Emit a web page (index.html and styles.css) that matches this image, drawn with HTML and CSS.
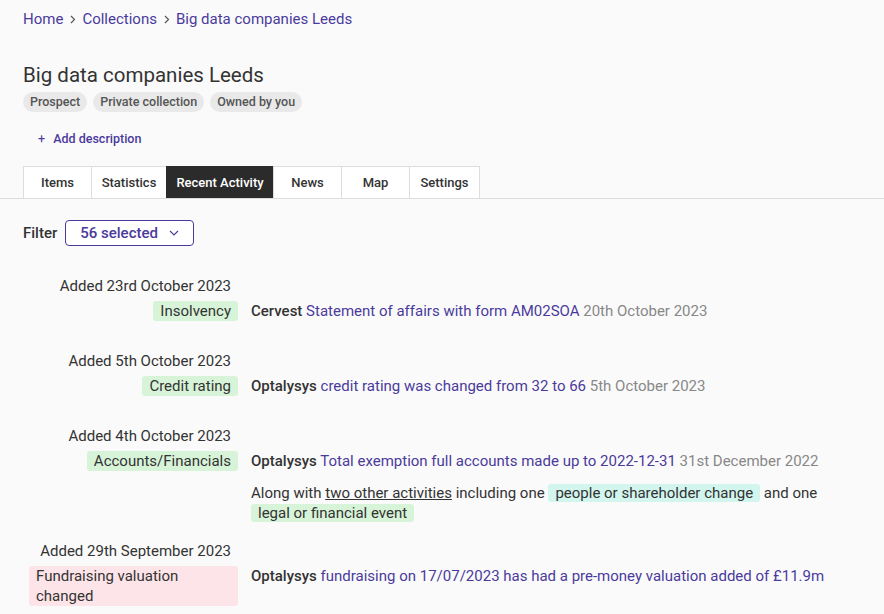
FILE: index.html
```html
<!DOCTYPE html>
<html lang="en">
<head>
    <meta charset="UTF-8">
    <meta name="viewport" content="width=device-width, initial-scale=1.0">
    <title>Big data companies Leeds</title>
    <link rel="stylesheet" href="styles.css">
</head>
<body>
    <div class="header">
        <nav class="breadcrumb">
            <a href="#">Home</a>
            <svg class="sep" width="6" height="9" viewBox="0 0 6 9"><path d="M1 1l3.5 3.5L1 8" fill="none" stroke="currentColor" stroke-width="1.2"/></svg>
            <a href="#">Collections</a>
            <svg class="sep" width="6" height="9" viewBox="0 0 6 9"><path d="M1 1l3.5 3.5L1 8" fill="none" stroke="currentColor" stroke-width="1.2"/></svg>
            <a href="#">Big data companies Leeds</a>
        </nav>

        <h1>Big data companies Leeds</h1>
        <div class="tags">
            <span class="tag">Prospect</span>
            <span class="tag">Private collection</span>
            <span class="tag">Owned by you</span>
        </div>

        <a href="#" class="add-desc"><span class="plus">+</span> Add description</a>
    </div>

    <div class="tabs-bar">
        <div class="tabs">
            <a href="#" class="tab">Items</a>
            <a href="#" class="tab">Statistics</a>
            <a href="#" class="tab active">Recent Activity</a>
            <a href="#" class="tab">News</a>
            <a href="#" class="tab">Map</a>
            <a href="#" class="tab">Settings</a>
        </div>
    </div>

    <div class="content">
        <div class="filter">
            <span class="filter-label">Filter</span>
            <button class="filter-btn">
                56 selected
                <svg width="10" height="6" viewBox="0 0 10 6"><path d="M1 1l4 4 4-4" fill="none" stroke="currentColor" stroke-width="1.1"/></svg>
            </button>
        </div>

        <div class="activity">
            <div class="when">
                <div class="added">Added 23rd October 2023</div>
                <span class="label green">Insolvency</span>
            </div>
            <div class="what">
                <p><b>Cervest</b> <a href="#">Statement of affairs with form AM02SOA</a> <span class="date">20th October 2023</span></p>
            </div>
        </div>

        <div class="activity">
            <div class="when">
                <div class="added">Added 5th October 2023</div>
                <span class="label green">Credit rating</span>
            </div>
            <div class="what">
                <p><b>Optalysys</b> <a href="#">credit rating was changed from 32 to 66</a> <span class="date">5th October 2023</span></p>
            </div>
        </div>

        <div class="activity">
            <div class="when">
                <div class="added">Added 4th October 2023</div>
                <span class="label green">Accounts/Financials</span>
            </div>
            <div class="what">
                <p><b>Optalysys</b> <a href="#">Total exemption full accounts made up to 2022-12-31</a> <span class="date">31st December 2022</span></p>
                <p class="more">Along with <a href="#" class="under">two other activities</a> including one <span class="label teal">people or shareholder change</span> and one <span class="label green">legal or financial event</span></p>
            </div>
        </div>

        <div class="activity">
            <div class="when">
                <div class="added">Added 29th September 2023</div>
                <span class="label pink wide">Fundraising valuation changed</span>
            </div>
            <div class="what">
                <p><b>Optalysys</b> <a href="#">fundraising on 17/07/2023 has had a pre-money valuation added of £11.9m</a></p>
            </div>
        </div>
    </div>
</body>
</html>
```

FILE: styles.css
```css
body {
    margin: 0;
    background: #fafafa;
    color: #333;
    font-family: Roboto, 'Liberation Sans', sans-serif;
    font-size: 15px;
}
a {
    color: #4a3a9c;
    text-decoration: none;
}
.header {
    padding: 9px 23px 0;
}
.breadcrumb {
    display: flex;
    align-items: center;
    line-height: 20px;
}
.breadcrumb .sep {
    color: #555;
    margin: 0 6px 0 7px;
}
h1 {
    margin: 33px 0 4px;
    font-size: 20.5px;
    font-weight: 400;
    line-height: 26px;
    color: #333;
}
.tags {
    display: flex;
    gap: 6px;
}
.tag {
    background: #e9e9e9;
    color: #555;
    font-size: 12.5px;
    font-weight: 500;
    border-radius: 10px;
    padding: 0 7px;
    line-height: 20px;
}
.add-desc {
    display: inline-block;
    margin: 17px 0 0 15px;
    font-size: 12.5px;
    font-weight: 500;
    line-height: 20px;
}
.add-desc .plus {
    font-weight: 400;
    margin-right: 5px;
}
.tabs-bar {
    margin-top: 17px;
    padding: 0 23px;
    border-bottom: 1px solid #ddd;
}
.tabs {
    display: flex;
}
.tab {
    box-sizing: border-box;
    width: 69px;
    height: 32px;
    display: flex;
    align-items: center;
    justify-content: center;
    background: #fff;
    border: 1px solid #ddd;
    border-bottom: none;
    margin-left: -1px;
    color: #333;
    font-size: 13px;
    font-weight: 500;
}
.tab:first-child {
    margin-left: 0;
}
.tab:nth-child(2) {
    width: 76px;
}
.tab.active {
    width: 108px;
    background: #2b2b2b;
    border-color: #2b2b2b;
    color: #fff;
}
.tab:last-child {
    width: 71px;
}
.content {
    padding: 21px 23px;
}
.filter {
    display: flex;
    align-items: center;
    gap: 8px;
}
.filter-label {
    font-weight: 500;
}
.filter-btn {
    display: flex;
    align-items: center;
    gap: 11px;
    height: 26px;
    padding: 0 14px;
    background: #fff;
    border: 1px solid #4a3a9c;
    border-radius: 4px;
    color: #4a3a9c;
    font-family: inherit;
    font-size: 15px;
    font-weight: 500;
}
.activity {
    display: grid;
    grid-template-columns: 215px 1fr;
    column-gap: 13px;
    margin-top: 30px;
}
.activity + .activity {
    margin-top: 18px;
}
.activity:last-child {
    margin-top: 20px;
}
.when {
    display: flex;
    flex-direction: column;
    align-items: flex-end;
}
.added {
    line-height: 20px;
    padding-right: 7px;
    margin-bottom: 5px;
}
.what {
    padding-top: 25px;
}
.what p {
    margin: 0 0 12px;
    line-height: 20px;
}
.what b {
    font-weight: 500;
}
.what .more {
    margin: 2px 0 -2px;
}
.date {
    color: #888;
}
.under {
    color: #333;
    text-decoration: underline;
}
.label {
    padding: 0 7px;
    border-radius: 3px;
    line-height: 20px;
    white-space: nowrap;
}
.green {
    background: #d8f4d8;
}
.teal {
    background: #d2f5ee;
}
.pink {
    background: #fde4e8;
}
.label.wide {
    box-sizing: border-box;
    width: 209px;
    white-space: normal;
}
```
